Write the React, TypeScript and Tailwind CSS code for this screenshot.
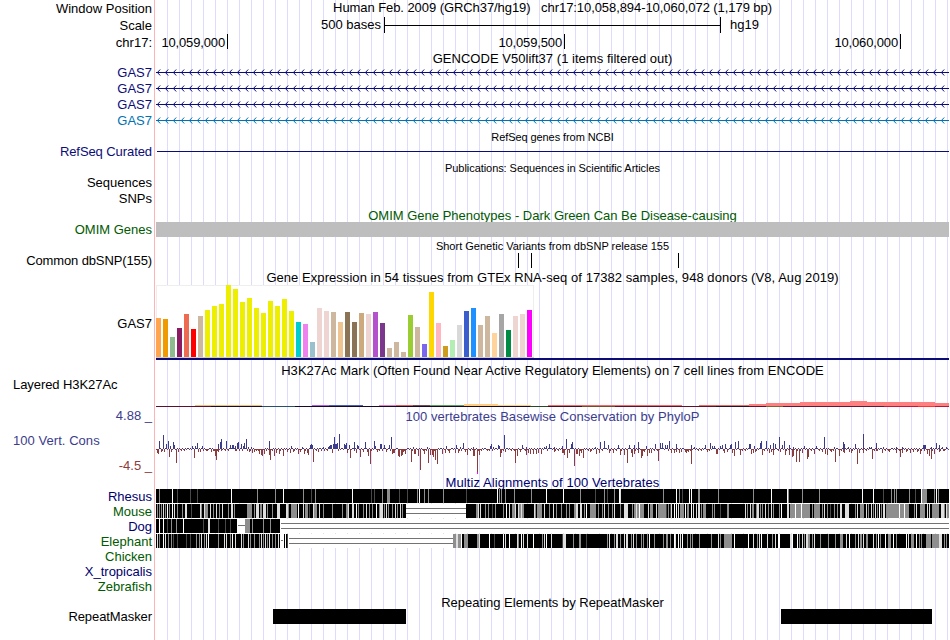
import type { ReactNode } from "react";

// genome tracks start at this pixel column and are 793px wide
const LEFT = 156;
const WIDTH = 793;

const SHADES: Record<string, string> = {
  k: "#000000",
  d: "#484848",
  g: "#8e8e8e",
  l: "#dedede",
  w: "#ffffff",
};

const RHESUS =
  "159g 172w 177d 190d 197d 231w 257g 275g 283w 303g 311d 315g 352w 371d 374d 382g 388g 387g 389g 399d 407d 417g 419w 424g 428g 443g 466d 497w 499g 501g 505g 514g 531g 546w 563w 580g 595d 604g 607d 614g 619w 620l 663g 676w 679g 682d 689w 691w 698g2 718g 753g 771w 787w 788g 802g 819g 862w 873w 883d 891g 894g 896g 909g 915d 921w 922g5 934g 936w 938g";

const MOUSE =
  "157g 159g 161g 163l 165g 167w 169g 172w 174l 177g 182g 185l2 191d 200l 201g 204l 205g3 210l 213g 216l 219g 222l 228g 231l2 234g 247g5 254g 256l3 260g2 263l3 267g 272g 277l3 286l2 288g 291g6 298w 303l 305g3 309d 313l 314g3 319l 323g 332g 342g 346g2 348l 352l2 356w 358g 363g 366l 369g 372g 376w 379g 380l3 384g 386l 388g 392g 395l 397g 400l 402g " +
  "476g2 478l 480l 485g 488g 492d 495g 503g 506w 509l 512g3 515l 518l 519g5 521l 534l 535g 537g5 544l 549g 553l 556g 561g 566g 569g 574g2 576l2 580l2 584g 586w 590g6 598g 602g 604l 608g 612g 614l 620g 624l4 632g 634g10 636l 639w 648l 650g3 656l 658g8 666d 668g 670d 671l 674w 676w 678l 680g4 685w 687g 688g 691w 693l 696l 698l2 701g 703g3 712g 714g 720d 727g2 745l 747g 750l 752g2 756g 757l2 760g 762g 765l 768g 771l 773g 779g 781w 787l2 790g5 795w 796g5 801w 802g8 812g 814g 815g5 822g 824l 827g 830d 834g 837g 840l2 845l4 855g 857l 860g4 866l 868g 871l 873g 875l 877g 879w 881g 883l2 886g13 899w 900g4 904w 905g4 914g 916l 920g5 927l 929l 932g7 941l3 944g 946l 947g2";

const DOG_LEFT = "159w 163w 167d 171g 176g 183w 203d 208l2 218d 225d 230d";
const DOG_RIGHT = "252g 263g 270g";

const ELEPHANT_LEFT =
  "157l 159g 163w 165l 168g 171g 173d 177d 186d 190d 196g 199g 201l 204g 206l 208w 218g 224l 226l 230g 232w 235l 241l 243g 248l 250g 254g 259g 261l 263g 265l 267g 269l 272g 275g 278l";

const ELEPHANT_RIGHT =
  "453g3 456l2 458g3 461w 464g4 477g2 479l 489w 494d 503w 505l 509w 517l 518g 521w 523l 527l 533w 542g 544l 546w 551l 562d 563l3 573g 579g2 586d 607g 609l 614g 616l2 620g 624l 626l2 631g 633l 636g 641g 643g 647g 649w 654g 663g 666g2 670g 674w 675l 678w 680l 682w 687g 690g 692g 699g 711g 718l 720g 724g8 734w 748w 753l 757g 759l 761w 767l 772g 775l 778w2 790l2 792w 797w 799g 802l 804g 806l2 808g2 812g 814l 820g 828g 835g 840g3 846l 849w 855g 858l 860g2 863l 866g2 873l 876g 878w 880g 885w 888g3 893w 896g 906w 908l 911g3 916w 919g 921g 926g5 932g7 939l3 944g 946g";

// phyloP scores, "column:height"
const CONSERVED =
  "159:8 163:14 166:5 168:8 170:3 173:7 174:4 192:3 195:3 197:6 202:3 218:5 220:7 221:10 226:8 230:4 232:4 233:4 235:3 237:6 238:7 241:5 243:3 244:6 246:10 248:2 251:2 269:8 291:3 302:2 310:4 311:5 312:4 323:2 328:2 329:3 330:4 331:4 333:5 334:12 335:5 336:5 337:6 339:15 344:5 345:4 346:6 349:4 354:7 357:4 358:3 365:7 374:8 375:3 380:5 381:5 384:4 389:4 391:12 413:2 427:2 446:3 456:4 460:2 463:6 473:2 490:3 491:5 493:2 498:4 499:3 504:14 522:4 526:2 544:2 546:3 549:5 554:2 562:3 566:10 571:5 572:7 595:2 600:7 604:8 608:4 618:4 629:4 634:4 638:7 646:3 655:5 660:6 662:6 665:4 667:4 669:8 676:5 691:4 694:2 705:4 710:6 712:3 714:3 720:3 722:4 725:5 730:4 731:5 735:7 738:8 749:5 750:5 754:3 760:6 761:8 766:8 770:4 773:6 775:5 779:12 782:4 784:8 789:4 793:2 804:3 816:3 824:12 834:2 843:7 844:5 848:2 855:5 863:15 869:2 871:2 876:6 883:2 896:2 902:2 923:4 924:4 925:4 931:2 936:6 939:4 942:2 946:2";

const ACCELERATED =
  "157:4 158:5 161:3 164:3 169:8 171:3 176:14 178:3 194:9 198:3 200:3 207:2 211:3 213:2 215:7 216:11 218:3 221:2 235:2 242:2 249:3 252:4 254:3 256:2 259:5 261:6 262:7 264:5 266:2 269:6 270:11 274:7 276:4 279:5 283:7 287:3 290:4 293:3 298:5 300:3 304:5 307:4 308:6 313:13 318:3 321:2 332:4 347:4 350:9 354:2 356:4 360:8 363:3 367:3 368:7 370:15 377:3 386:3 392:5 393:4 394:4 398:7 399:8 401:7 402:6 403:3 405:5 411:13 414:5 415:5 418:7 420:21 424:5 428:14 430:6 432:6 433:8 435:11 437:15 442:5 445:4 449:4 455:4 458:4 461:2 465:3 467:6 473:7 474:7 477:25 479:6 487:2 500:8 501:4 505:3 515:14 517:7 520:3 526:6 528:4 530:5 533:5 536:5 538:4 541:5 554:3 562:4 563:4 564:6 567:9 569:4 574:17 576:5 577:5 579:7 581:4 583:9 590:3 596:5 599:4 609:4 613:4 616:2 620:6 624:6 627:14 631:4 632:8 634:5 638:4 641:9 642:7 644:3 647:7 649:4 651:4 658:12 671:4 674:4 676:3 679:4 681:3 685:3 686:4 688:3 691:15 707:3 716:5 717:5 724:4 727:3 732:4 734:7 740:6 751:5 753:4 755:3 762:6 769:4 771:3 773:6 780:3 785:6 789:6 792:8 793:7 796:13 799:13 802:4 807:10 808:8 814:5 822:3 825:5 827:6 831:3 835:13 839:7 843:3 844:4 849:3 851:4 857:15 859:4 863:4 872:10 876:2 882:4 889:3 896:4 900:8 902:4 906:3 910:4 913:3 917:3 920:5 924:2 927:5 929:7 931:10 934:5 939:3 944:2";

// GTEx median expression per tissue: [bar height, colour]
const GTEX: [number, string][] = [
  [39, "#ffa54f"], [38, "#ee9a00"], [20, "#8fbc8f"], [29, "#8b1c62"], [43, "#ee6a50"], [28, "#ff0000"],
  [41, "#cdb79e"], [47, "#eeee00"], [51, "#eeee00"], [53, "#eeee00"], [72, "#eeee00"], [68, "#eeee00"],
  [55, "#eeee00"], [59, "#eeee00"], [49, "#eeee00"], [44, "#eeee00"], [56, "#eeee00"], [51, "#eeee00"],
  [58, "#eeee00"], [46, "#eeee00"], [35, "#00cdcd"], [33, "#ee82ee"], [15, "#9ac0cd"], [49, "#eed5d2"],
  [46, "#eed5d2"], [45, "#cdb79e"], [35, "#eec591"], [45, "#8b7355"], [35, "#8b7355"], [44, "#cdaa7d"],
  [43, "#eed5d2"], [45, "#b452cd"], [34, "#7a378b"], [9, "#cdb79e"], [15, "#cdb79e"], [5, "#cdb79e"],
  [42, "#9acd32"], [30, "#cdb79e"], [13, "#7a67ee"], [65, "#ffd700"], [34, "#ffb6c1"], [11, "#cd9b1d"],
  [17, "#b4eeb4"], [32, "#d9d9d9"], [46, "#3a5fcd"], [49, "#1e90ff"], [32, "#cdb79e"], [41, "#cdb79e"],
  [24, "#ffd39b"], [43, "#a6a6a6"], [27, "#008b45"], [41, "#eed5d2"], [43, "#eed5d2"], [47, "#ff00ff"],
];

// H3K27Ac signal: [from, to, height above the base line, colour]
const H3K27AC: [number, number, number, string][] = [
  [195, 262, 1, "#eebf80"], [312, 329, 1, "#b060e0"], [329, 363, 1, "#5060b0"], [379, 396, 1, "#e080c0"],
  [396, 413, 1, "#e06060"], [413, 430, 1, "#705050"], [430, 464, 1, "#60a060"], [464, 498, 2, "#ffcc80"],
  [498, 531, 1, "#ffcc80"], [548, 682, 1, "#ee7070"], [699, 749, 1, "#e87068"], [749, 766, 2, "#ff8080"],
  [766, 800, 3, "#ff8080"], [800, 850, 4, "#ff8080"], [850, 867, 5, "#ff8080"], [867, 935, 4, "#ff8080"],
  [935, 949, 3, "#ff8080"],
];

const H3K27AC_BASE: [number, number, string][] = [
  [156, 211, "#5c1030"], [211, 262, "#1c0c20"], [262, 295, "#285068"], [295, 530, "#180828"],
  [530, 548, "#284828"], [548, 582, "#401020"], [582, 615, "#705028"], [615, 716, "#601028"],
  [716, 749, "#281028"], [749, 766, "#601028"], [766, 783, "#806030"], [783, 884, "#601838"],
  [884, 918, "#c01838"], [918, 935, "#ff3030"], [935, 949, "#b01838"],
];

function Title({ className, children }: { className: string; children: ReactNode }) {
  return <div className={`flex shrink-0 items-center justify-center whitespace-pre ${className}`}>{children}</div>;
}

function Label({ className, children }: { className: string; children: ReactNode }) {
  return <div className={`flex shrink-0 items-center justify-end whitespace-pre pr-[2px] ${className}`}>{children}</div>;
}

function Track({ height, y, children }: { height: number; y: number; children: ReactNode }) {
  return (
    <svg
      className="block shrink-0"
      width={WIDTH}
      height={height}
      viewBox={`${LEFT} ${y} ${WIDTH} ${height}`}
      shapeRendering="crispEdges"
    >
      {children}
    </svg>
  );
}

function GeneTrack({ color }: { color: string }) {
  const arrows = [];
  for (let x = 157; x < 947; x += 8) {
    arrows.push(`M${x + 3.2} 5.5L${x + 0.4} 8.5L${x + 3.2} 11.5`);
  }
  return (
    <Track height={16} y={0}>
      <rect x={LEFT} y={8} width={WIDTH} height={1} fill={color} />
      <path d={arrows.join("")} stroke={color} strokeWidth={1} fill="none" shapeRendering="auto" />
    </Track>
  );
}

function Block({ from, to, data }: { from: number; to: number; data: string }) {
  return (
    <>
      <rect x={from} y={0} width={to - from} height={14} fill="#000" />
      {data.split(" ").map((item) => {
        const [, x, shade, w] = item.match(/(\d+)([a-z])(\d*)/)!;
        return <rect key={item} x={Number(x)} y={0} width={Number(w || 1)} height={14} fill={SHADES[shade]} />;
      })}
    </>
  );
}

function Gap({ from, to }: { from: number; to: number }) {
  return (
    <>
      <rect x={from} y={0} width={to - from} height={14} fill="#fff" />
      <rect x={from} y={4} width={to - from} height={1} fill="#737373" />
      <rect x={from} y={9} width={to - from} height={1} fill="#737373" />
    </>
  );
}

function toBars(data: string) {
  return data.split(" ").map((item) => item.split(":").map(Number));
}

function PhyloP() {
  const up = toBars(CONSERVED);
  const down = toBars(ACCELERATED);
  const used = new Set([...up, ...down].map(([x]) => x));
  const small = [];
  for (let x = LEFT; x < LEFT + WIDTH; x++) {
    if (!used.has(x)) small.push(x);
  }
  return (
    <Track height={50} y={425}>
      {small.map((x) => {
        const n = (x * 37) % 11;
        const isUp = n < 5;
        return (
          <rect key={x} x={x} y={isUp ? 448 : 449} width={1} height={n > 8 ? 2 : 1} fill={isUp ? "#3c3c8c" : "#8c3c3c"} />
        );
      })}
      {down.map(([x, h]) => (
        <rect key={`d${x}`} x={x} y={449} width={1} height={h} fill="#8c3c3c" />
      ))}
      {up.map(([x, h]) => (
        <rect key={`u${x}`} x={x} y={449 - h} width={1} height={h} fill="#3c3c8c" />
      ))}
      <rect x={477} y={472} width={1} height={2} fill="#ff00ff" />
    </Track>
  );
}

function Labels() {
  return (
    <div className="flex w-[155px] shrink-0 flex-col border-r border-[#ffb4b4]">
      <Label className="h-[17px]">Window Position</Label>
      <Label className="h-[17px]">Scale</Label>
      <Label className="h-[17px]">chr17:</Label>
      <Label className="mt-[13px] h-4 text-[#0c0c78]">GAS7</Label>
      <Label className="h-4 text-[#0c0c78]">GAS7</Label>
      <Label className="h-4 text-[#0c0c78]">GAS7</Label>
      <Label className="h-4 text-[#0072b2]">GAS7</Label>
      <Label className="mt-[15px] h-4 tracking-[-0.08px] text-[#0c0c78]">RefSeq Curated</Label>
      <Label className="mt-[15px] h-4">Sequences</Label>
      <Label className="h-4">SNPs</Label>
      <Label className="mt-4 h-[15px] text-[#005a00]">OMIM Genes</Label>
      <Label className="mt-[15px] h-4 tracking-[-0.12px]">Common dbSNP(155)</Label>
      <Label className="mt-[47px] h-4">GAS7</Label>
      <div className="mt-[45px] flex h-4 items-center pl-[13px] tracking-[-0.07px]">Layered H3K27Ac</div>
      <Label className="mt-[15px] h-4 text-[#3c3c8c]">4.88 _</Label>
      <div className="mt-[9px] flex h-4 items-center pl-[13px] tracking-[0.05px] text-[#3c3c8c]">100 Vert. Cons</div>
      <Label className="mt-[9px] h-4 text-[#8c3c3c]">-4.5 _</Label>
      <Label className="mt-4 h-[15px] text-[#00006e]">Rhesus</Label>
      <Label className="h-[15px] text-[#005a00]">Mouse</Label>
      <Label className="h-[15px] text-[#00006e]">Dog</Label>
      <Label className="h-[15px] text-[#005a00]">Elephant</Label>
      <Label className="h-[15px] text-[#005a00]">Chicken</Label>
      <Label className="h-[15px] text-[#00006e]">X_tropicalis</Label>
      <Label className="h-[15px] text-[#005a00]">Zebrafish</Label>
      <Label className="mt-[14px] h-4 tracking-[-0.08px]">RepeatMasker</Label>
    </div>
  );
}

function App() {
  return (
    <div className="flex h-[640px] w-[950px] overflow-hidden bg-white font-['Liberation_Sans',Arial,sans-serif] text-[13px] leading-[15px] text-black">
      <Labels />

      <div className="ml-px flex w-[793px] shrink-0 flex-col bg-[repeating-linear-gradient(to_right,transparent_0_11px,#dcdcff_11px_12px)]">
        <Title className="h-[17px] pb-[2px] tracking-[-0.07px]">
          {"Human Feb. 2009 (GRCh37/hg19)   chr17:10,058,894-10,060,072 (1,179 bp)"}
        </Title>

        <div className="flex h-[17px] shrink-0 items-start">
          <span className="w-[228px] pr-[3px] text-right">500 bases</span>
          <div className="flex h-4 w-[337px] items-center border-x border-black">
            <div className="h-px w-full bg-black" />
          </div>
          <span className="pl-[9px]">hg19</span>
        </div>

        <div className="flex h-4 shrink-0 text-right tracking-[-0.15px]">
          <div className="h-[15px] w-[72px] border-r border-black pr-[2px] pt-px">10,059,000</div>
          <div className="h-[15px] w-[337px] border-r border-black pr-[2px] pt-px">10,059,500</div>
          <div className="h-[15px] w-[336px] border-r border-black pr-[2px] pt-px">10,060,000</div>
        </div>

        <Title className="h-[14px] pt-[2px] tracking-[0.03px]">GENCODE V50lift37 (1 items filtered out)</Title>
        <GeneTrack color="#0c0c78" />
        <GeneTrack color="#0c0c78" />
        <GeneTrack color="#0c0c78" />
        <GeneTrack color="#0072b2" />

        <Title className="h-4 pt-[2px] text-[11px] tracking-[-0.08px]">RefSeq genes from NCBI</Title>
        <Track height={16} y={144}>
          <rect x={157} y={151} width={792} height={1} fill="#0c0c78" />
        </Track>

        <Title className="h-4 text-[11px] tracking-[-0.06px]">Publications: Sequences in Scientific Articles</Title>
        <Title className="mt-[31px] h-[15px] pt-[2px] text-[#005a00]">
          OMIM Gene Phenotypes - Dark Green Can Be Disease-causing
        </Title>
        <div className="relative h-[15px] shrink-0 bg-[#bebebe]" />

        <Title className="h-4 pt-[2px] text-[11px]">Short Genetic Variants from dbSNP release 155</Title>
        <Track height={16} y={253}>
          <rect x={518} y={253} width={1} height={15} />
          <rect x={531} y={253} width={1} height={15} />
          <rect x={678} y={253} width={1} height={15} />
        </Track>

        <Title className="h-4 tracking-[0.055px]">
          Gene Expression in 54 tissues from GTEx RNA-seq of 17382 samples, 948 donors (V8, Aug 2019)
        </Title>
        <Track height={76} y={285}>
          <rect x={156} y={285} width={378} height={73} fill="#eeeeee" />
          <rect x={157} y={286} width={376} height={71} fill="#ffffff" />
          <rect x={156} y={357} width={378} height={1} fill="#cccccc" />
          {GTEX.map(([h, color], i) => (
            <rect key={i} x={LEFT + i * 7} y={357 - h} width={5} height={h} fill={color} />
          ))}
          <rect x={156} y={358} width={WIDTH} height={2} fill="#0c0c78" />
        </Track>

        <Title className="h-[18px] tracking-[0.06px]">
          H3K27Ac Mark (Often Found Near Active Regulatory Elements) on 7 cell lines from ENCODE
        </Title>
        <Track height={30} y={379}>
          {H3K27AC.map(([from, to, h, color]) => (
            <rect key={from} x={from} y={406 - h} width={to - from} height={h} fill={color} />
          ))}
          {H3K27AC_BASE.map(([from, to, color]) => (
            <rect key={from} x={from} y={406} width={to - from} height={1} fill={color} />
          ))}
        </Track>

        <Title className="h-4 pb-[2px] tracking-[0.04px] text-[#3c3c8c]">
          100 vertebrates Basewise Conservation by PhyloP
        </Title>
        <PhyloP />

        <Title className="h-[14px] tracking-[0.08px] text-[#00006e]">Multiz Alignments of 100 Vertebrates</Title>
        <Track height={15} y={0}>
          <Block from={156} to={949} data={RHESUS} />
        </Track>
        <Track height={15} y={0}>
          <Block from={156} to={949} data={MOUSE} />
          <Gap from={406} to={466} />
        </Track>
        <Track height={15} y={0}>
          <Block from={156} to={237} data={DOG_LEFT} />
          <Block from={250} to={280} data={DOG_RIGHT} />
          <rect x={237} y={0} width={8} height={14} fill="#fff" />
          <rect x={238} y={6} width={7} height={1} fill="#737373" />
          <rect x={245} y={0} width={5} height={14} fill="#8e8e8e" />
          <Gap from={281} to={949} />
        </Track>
        <Track height={15} y={0}>
          <Block from={156} to={280} data={ELEPHANT_LEFT} />
          <rect x={280} y={0} width={9} height={14} fill="#fff" />
          <rect x={281} y={6} width={2} height={1} fill="#737373" />
          <rect x={284} y={0} width={1} height={14} />
          <rect x={286} y={0} width={1} height={14} />
          <rect x={287} y={0} width={1} height={14} fill="#484848" />
          <Gap from={289} to={453} />
          <Block from={453} to={949} data={ELEPHANT_RIGHT} />
        </Track>

        <Title className="mt-[46px] h-[14px]">Repeating Elements by RepeatMasker</Title>
        <Track height={16} y={609}>
          <rect x={273} y={609} width={133} height={15} />
          <rect x={781} y={609} width={151} height={15} />
        </Track>
      </div>
    </div>
  );
}

export default App;
